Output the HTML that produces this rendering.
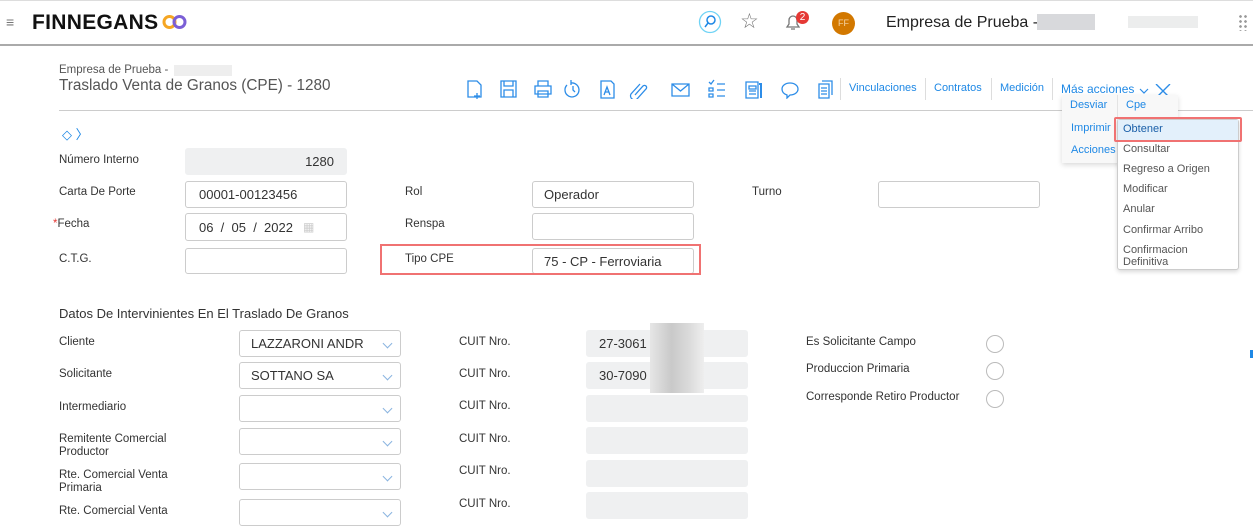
<!DOCTYPE html>
<html><head><meta charset="utf-8"><style>
*{box-sizing:border-box;margin:0;padding:0}
body{width:1253px;height:519px;overflow:hidden;background:#fff;font-family:"Liberation Sans",Arial,sans-serif;position:relative;color:#333}
.a{position:absolute;white-space:nowrap}
.top{position:absolute;left:0;top:0;width:1253px;height:46px;background:#fff;border-top:1px solid #ddd;border-bottom:2px solid #aaa}
.lbl{position:absolute;font-size:11.5px;color:#333;line-height:13px}
.box{position:absolute;border:1px solid #ccc;border-radius:3px;background:#fff;font-size:13px;color:#333;padding-left:13px;display:flex;align-items:center}
.gray{background:#eff0f1;border-color:#eff0f1}
.sel::after{content:"";position:absolute;right:9px;top:9px;width:6px;height:6px;border-right:1px solid #8ab4e0;border-bottom:1px solid #8ab4e0;transform:rotate(45deg)}
.ic{position:absolute;top:79px}
.lk{position:absolute;top:82px;font-size:11px;color:#1e88e5}
.radio{position:absolute;width:18px;height:18px;border:1px solid #bbb;border-radius:50%}
.dd{font-size:11px;color:#555}
</style></head><body>
<div class="top"></div>
<div class="a" style="left:6px;top:14px;font-size:14px;color:#777">≡</div>
<div class="a" style="left:32px;top:11px;font-size:21px;font-weight:bold;color:#111;letter-spacing:0.3px">FINNEGANS</div>
<svg class="a" style="left:162px;top:14px" width="26" height="16"><circle cx="7.5" cy="8" r="5.5" fill="none" stroke="#f5a623" stroke-width="3"/><circle cx="17.5" cy="8" r="5.5" fill="none" stroke="#7b5fd6" stroke-width="3"/></svg>
<svg class="a" style="left:698px;top:10px" width="24" height="24"><circle cx="12" cy="12" r="10.5" fill="none" stroke="#6fd3f5" stroke-width="1.3"/><circle cx="13" cy="10" r="4" fill="none" stroke="#1e88e5" stroke-width="1.5"/><path d="M10 13l-3 4" stroke="#1e88e5" stroke-width="1.5"/></svg>
<div class="a" style="left:740px;top:9px;font-size:21px;color:#777">☆</div>
<svg class="a" style="left:784px;top:12px" width="18" height="20"><path d="M3 15h12l-2-3V8a4 4 0 0 0-8 0v4z M7 17h4" fill="none" stroke="#777" stroke-width="1.3"/></svg>
<div class="a" style="left:796px;top:11px;width:13px;height:13px;border-radius:50%;background:#e53935;color:#fff;font-size:10px;text-align:center;line-height:13px">2</div>
<div class="a" style="left:832px;top:12px;width:23px;height:23px;border-radius:50%;background:#d27800;color:#f5d5a8;font-size:9px;text-align:center;line-height:23px">FF</div>
<div class="a" style="left:886px;top:14px;font-size:16px;color:#222">Empresa de Prueba -</div>
<div class="a" style="left:1037px;top:14px;width:58px;height:16px;background:#d8d9dc"></div>
<div class="a" style="left:1128px;top:16px;width:70px;height:12px;background:#eceded"></div>
<div class="a" style="left:1238px;top:14px;width:10px;height:17px;background:radial-gradient(circle,#999 1.2px,transparent 1.5px) 0 0/5px 5px"></div>

<div class="a" style="left:59px;top:64px;font-size:11.5px;color:#555">Empresa de Prueba -</div>
<div class="a" style="left:174px;top:65px;width:58px;height:11px;background:#eee"></div>
<div class="a" style="left:59px;top:77px;font-size:15.3px;color:#555">Traslado Venta de Granos (CPE) - 1280</div>
<div class="a" style="left:59px;top:110px;width:1194px;height:1px;background:#ccc"></div>
<div class="a" style="left:62px;top:124px;font-size:13px;color:#1e88e5">◇ 〉</div>

<svg class="ic" style="left:465px" width="380" height="20" fill="none" stroke="#2d8de8" stroke-width="1.3">
<path d="M3 2h9l4 4v12H3z M12 14v6M9 17h6"/>
<path d="M36 2h15v16H36z M39 2v5h9V2 M39 11h9v7h-9z"/>
<path d="M70 7h16v8H70z M73 2h10v5H73z M73 12h10v6H73z"/>
<path d="M106 4a7 7 0 1 1-4 2 M106 1v5 M108 7v4l2 2"/>
<path d="M136 2h10l3 3v14H136z M139 16l3-8 3 8 M140 13h4"/>
<path d="M170 16l8-9a2 2 0 0 1 3 3l-9 10a4 4 0 0 1-6-5l9-10"/>
<path d="M207 5h17v12H207z M207 5l8.5 7 8.5-7"/>
<path d="M244 3l2 2 3-4 M244 9h4v3h-4z M244 15h4v3h-4z M252 5h8 M252 11h8 M252 17h8"/>
<path d="M281 3h12v16H281z M284 7h7v3h-7z M284 12h7 M284 15h7" /><path d="M294 5h2v14" stroke-width="2"/>
<path d="M325 4c5 0 8 3 8 6s-3 6-8 6l-3 3v-3c-3-1-5-3-5-6 0-3 3-6 8-6z"/>
<path d="M354 5h10v14H354z M357 2h10v14 M356 9h6M356 12h6M356 15h6"/>
</svg>
<div class="a" style="left:840px;top:78px;width:1px;height:22px;background:#ddd"></div>
<div class="lk" style="left:849px">Vinculaciones</div>
<div class="a" style="left:925px;top:78px;width:1px;height:22px;background:#ddd"></div>
<div class="lk" style="left:934px">Contratos</div>
<div class="a" style="left:991px;top:78px;width:1px;height:22px;background:#ddd"></div>
<div class="lk" style="left:1000px">Medición</div>
<div class="a" style="left:1052px;top:78px;width:1px;height:22px;background:#ddd"></div>
<div class="lk" style="left:1061px;top:82px;font-size:12px">Más acciones</div>
<svg class="a" style="left:1139px;top:84px" width="36" height="16" fill="none" stroke="#2d8de8" stroke-width="1.2"><path d="M1 5l4 4 4-4"/><path d="M17 0l14 14M31 0L17 14" stroke-width="1.4"/></svg>

<div class="a" style="left:1062px;top:95px;width:116px;height:68px;background:#f8f8f8;box-shadow:0 2px 5px rgba(0,0,0,.15)"></div>
<div class="a" style="left:1117px;top:95px;width:1px;height:68px;background:#e3e3e3"></div>
<div class="a" style="left:1070px;top:99px;font-size:11px;color:#1e88e5">Desviar</div>
<div class="a" style="left:1126px;top:99px;font-size:11px;color:#1e88e5">Cpe</div>
<div class="a" style="left:1071px;top:122px;font-size:11px;color:#1e88e5">Imprimir</div>
<div class="a" style="left:1071px;top:144px;font-size:11px;color:#1e88e5">Acciones</div>
<div class="a" style="left:1117px;top:119px;width:122px;height:151px;background:#fff;border:1px solid #ccc;border-radius:3px;box-shadow:0 2px 4px rgba(0,0,0,.15)"></div>
<div class="a" style="left:1118px;top:120px;width:120px;height:20px;background:#e3f0fb"></div>
<div class="a" style="left:1114px;top:117px;width:128px;height:25px;border:2px solid #f07272;border-radius:2px"></div>
<div class="a dd" style="left:1123px;top:123px;color:#1a5fa8">Obtener</div>
<div class="a dd" style="left:1123px;top:143px">Consultar</div>
<div class="a dd" style="left:1123px;top:163px">Regreso a Origen</div>
<div class="a dd" style="left:1123px;top:183px">Modificar</div>
<div class="a dd" style="left:1123px;top:203px">Anular</div>
<div class="a dd" style="left:1123px;top:224px">Confirmar Arribo</div>
<div class="a dd" style="left:1123px;top:244px;line-height:12px">Confirmacion<br>Definitiva</div>

<div class="lbl" style="left:59px;top:154px">Número Interno</div>
<div class="box gray" style="left:185px;top:148px;width:162px;height:27px;justify-content:flex-end;padding-right:12px">1280</div>
<div class="lbl" style="left:59px;top:186px">Carta De Porte</div>
<div class="box" style="left:185px;top:181px;width:162px;height:27px">00001-00123456</div>
<div class="lbl" style="left:53px;top:218px"><span style="color:#e53935">*</span>Fecha</div>
<div class="box" style="left:185px;top:213px;width:162px;height:28px">06 &nbsp;/ &nbsp;05 &nbsp;/ &nbsp;2022 <span style="color:#ccc;margin-left:10px;font-size:12px">▦</span></div>
<div class="lbl" style="left:59px;top:253px">C.T.G.</div>
<div class="box" style="left:185px;top:248px;width:162px;height:26px"></div>
<div class="lbl" style="left:405px;top:186px">Rol</div>
<div class="box" style="left:532px;top:181px;width:162px;height:27px;padding-left:11px">Operador</div>
<div class="lbl" style="left:405px;top:218px">Renspa</div>
<div class="box" style="left:532px;top:213px;width:162px;height:27px"></div>
<div class="lbl" style="left:405px;top:253px">Tipo CPE</div>
<div class="box" style="left:532px;top:248px;width:162px;height:26px;padding-left:11px">75 - CP - Ferroviaria</div>
<div class="a" style="left:380px;top:244px;width:321px;height:31px;border:2px solid #f07272"></div>
<div class="lbl" style="left:752px;top:186px">Turno</div>
<div class="box" style="left:878px;top:181px;width:162px;height:27px"></div>

<div class="a" style="left:59px;top:306px;font-size:13px;color:#333">Datos De Intervinientes En El Traslado De Granos</div>

<div class="lbl" style="left:59px;top:336px">Cliente</div>
<div class="lbl" style="left:59px;top:368px">Solicitante</div>
<div class="lbl" style="left:59px;top:401px">Intermediario</div>
<div class="lbl" style="left:59px;top:433px">Remitente Comercial<br>Productor</div>
<div class="lbl" style="left:59px;top:469px">Rte. Comercial Venta<br>Primaria</div>
<div class="lbl" style="left:59px;top:505px">Rte. Comercial Venta</div>

<div class="box sel" style="left:239px;top:330px;width:162px;height:27px;padding-left:11px">LAZZARONI ANDR</div>
<div class="box sel" style="left:239px;top:362px;width:162px;height:27px;padding-left:11px">SOTTANO SA</div>
<div class="box sel" style="left:239px;top:395px;width:162px;height:27px"></div>
<div class="box sel" style="left:239px;top:428px;width:162px;height:27px"></div>
<div class="box sel" style="left:239px;top:463px;width:162px;height:27px"></div>
<div class="box sel" style="left:239px;top:499px;width:162px;height:27px"></div>

<div class="lbl" style="left:459px;top:336px">CUIT Nro.</div>
<div class="lbl" style="left:459px;top:368px">CUIT Nro.</div>
<div class="lbl" style="left:459px;top:400px">CUIT Nro.</div>
<div class="lbl" style="left:459px;top:433px">CUIT Nro.</div>
<div class="lbl" style="left:459px;top:465px">CUIT Nro.</div>
<div class="lbl" style="left:459px;top:498px">CUIT Nro.</div>

<div class="box gray" style="left:586px;top:330px;width:162px;height:27px;padding-left:12px">27-3061</div>
<div class="box gray" style="left:586px;top:362px;width:162px;height:27px;padding-left:12px">30-7090</div>
<div class="a" style="left:650px;top:323px;width:54px;height:70px;background:linear-gradient(90deg,#e6e6e6,#c9c9c9 40%,#d9d9d9 70%,#eee)"></div>
<div class="box gray" style="left:586px;top:395px;width:162px;height:27px"></div>
<div class="box gray" style="left:586px;top:427px;width:162px;height:27px"></div>
<div class="box gray" style="left:586px;top:460px;width:162px;height:27px"></div>
<div class="box gray" style="left:586px;top:492px;width:162px;height:27px"></div>

<div class="lbl" style="left:806px;top:336px">Es Solicitante Campo</div>
<div class="lbl" style="left:806px;top:363px">Produccion Primaria</div>
<div class="lbl" style="left:806px;top:391px">Corresponde Retiro Productor</div>
<div class="radio" style="left:986px;top:335px"></div>
<div class="radio" style="left:986px;top:362px"></div>
<div class="radio" style="left:986px;top:390px"></div>
<div class="a" style="left:1250px;top:350px;width:3px;height:8px;background:#1e88e5"></div>
</body></html>
